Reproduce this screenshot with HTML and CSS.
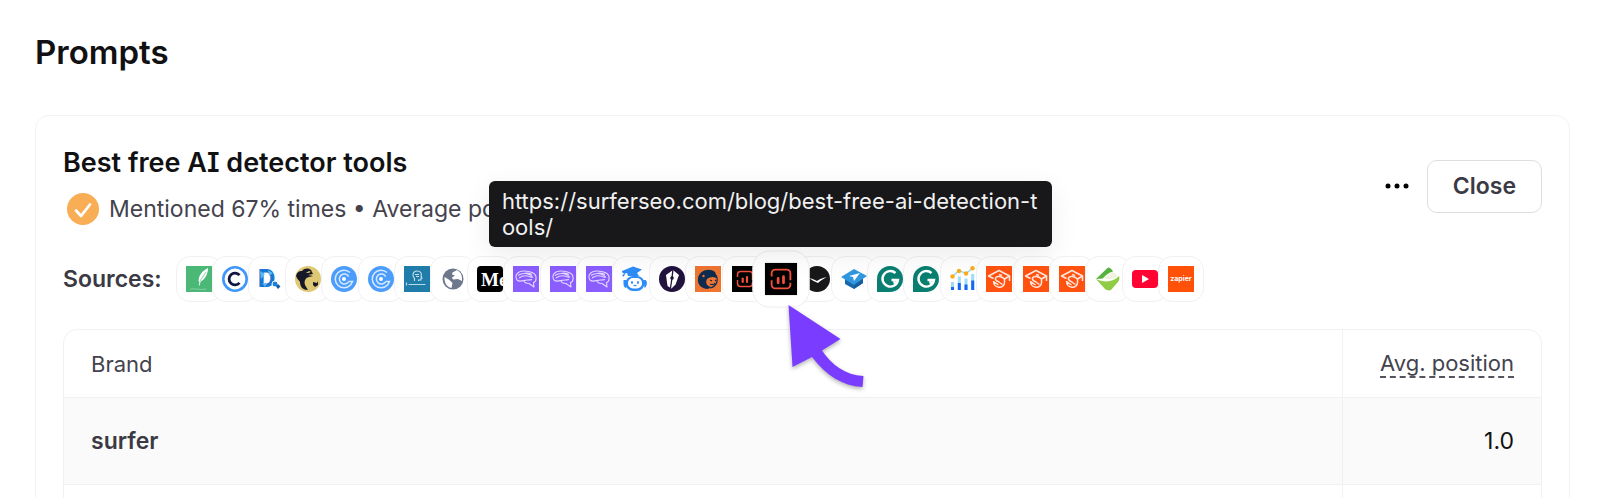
FILE: index.html
```html
<!DOCTYPE html>
<html lang="en">
<head>
<meta charset="utf-8">
<title>Prompts</title>
<link rel="stylesheet" href="styles.css">
</head>
<body>
<svg class="defs" aria-hidden="true">
  <symbol id="i-leaf" viewBox="0 0 26 26"><path fill="#4bb878" d="M0 0h26v26H0z"/><path fill="#fff" d="M22 2c-6 3-9 7-9.500 13l1 1-.7 3.500h.8l1-4C19 13.500 22 8 22 2z"/><path fill="none" stroke="#86cfa4" d="M4 23.500c4-2 8 1 16-.5"/><path stroke="#4bb878" stroke-width=".6" d="m14 15 6-9"/></symbol>
  <symbol id="i-copy" viewBox="0 0 26 26"><circle cx="13" cy="13" r="11.700" fill="#fff" stroke="#4096fb" stroke-width="2.600"/><path d="M17.500 9.200a5.900 5.900 0 1 0 0 7.600" fill="none" stroke="#131340" stroke-width="2.800"/></symbol>
  <symbol id="i-bird" viewBox="0 0 26 26"><circle cx="13" cy="13" r="13" fill="#dfc874"/><path fill="#17172a" d="M1 10c1-4 3-5 6-5 3-3 6-3 9-1l2 4-5 1 5 1-4 1c-4 1-5 4-4 8l3 5c-5 0-8-3-8-8-1-2-3-3-4-6zm17 6 4 1 1-2v4l-3 2-2-2z"/><path fill="#dfc874" d="m11 7 3-2 2 1-3 1z"/></symbol>
  <symbol id="i-swirl" viewBox="0 0 26 26"><circle cx="13" cy="13" r="13" fill="#4b9cfb"/><g fill="none" stroke="#d7e9ff" stroke-width="1.500"><path d="M19 6.500A8.800 8.800 0 1 0 19.500 19l2-3.500h-4"/><path d="M17.700 15.500a5 5 0 1 1 0-5"/></g><circle cx="13" cy="13" r="2" fill="#fff"/></symbol>
  <symbol id="i-head" viewBox="0 0 26 26"><path fill="#207ca8" d="M0 0h26v26H0z"/><path fill="none" stroke="#c8e2ee" stroke-width="1.100" d="M10.500 15v-2.500c-3-3-1.500-7.500 2.500-7.500s5 3 4 5l1 2h-1v2h-2.500V15M11 8.500h4m-3 2h3"/><path stroke="#b9dae8" stroke-width="1.200" d="M4.500 18.500h17M2.500 16.500v3"/></symbol>
  <symbol id="i-globe" viewBox="0 0 26 26"><circle cx="13" cy="13" r="10.500" fill="#6d788d"/><path fill="#fff" d="M12.500 6.500 17 4c3 1.500 5 4.500 5 8v3l-4-2-5 .5-1-2 3-2-3-1zM4.500 11l5 3 3 3-1 5C7 21 4 17 4.500 11z"/></symbol>
  <symbol id="i-brain" viewBox="0 0 26 26"><path fill="#8a5dff" d="M0 0h26v26H0z"/><g fill="none" stroke="#e3d8ff" stroke-width="1.100" stroke-linejoin="round"><path d="M4 14c-3-5 1-9 7-9s13 2 12 8c0 2-1 3-2.500 3.500L21 21l-5-3.500c-3 0-5-1-5-3 2-1 5 0 8-1"/><path d="M4 14c2 2 5 1 7 .5M5 9.500c4-3 11-3 15 2M6 12c4-3 8-3 13-.500M11 7.500c3-1 6 0 8 1"/></g></symbol>
  <symbol id="i-robot" viewBox="0 0 26 26"><path fill="#2e8cf7" d="m-1 5.500 12-5 9 3-5 3.500 2 3H6l-1-3-2 .5-1 3-2-.5 2-2.500zM1.500 14h3v8c-2 0-3-2-3-4zm20 0h2c2 1 2 6-1 8z"/><rect x="3.500" y="10" width="19" height="15" rx="7.500" fill="#2e8cf7"/><rect x="6" y="12" width="14" height="10.500" rx="5" fill="#fff"/><path stroke="#2e8cf7" stroke-width="1.800" stroke-linecap="round" d="M10 16v1m6-1v1"/><path fill="none" stroke="#2e8cf7" stroke-width="1.200" d="M11.500 19.500h3"/></symbol>
  <symbol id="i-pen" viewBox="0 0 26 26"><circle cx="13" cy="13" r="13" fill="#20113d"/><path fill="#fff" d="m14 4-7 5 1.500 11 4 2.500 4-4L20 9z"/><path stroke="#20113d" stroke-width="1.300" d="m14 3-1 9-1.500 10"/><circle cx="13" cy="12" r="1.800" fill="#20113d"/></symbol>
  <symbol id="i-sloth" viewBox="0 0 26 26"><path fill="#ee7532" d="M0 0h26v26H0z"/><path fill="#0e2b50" d="M20 6C14 1 4 5 3 12s4 11 10 11l3-2c-4-1-6-4-4-8 3-2 6-3 9-1 1-1 0-4-1-6z"/><path fill="none" stroke="#0e2b50" stroke-width="1.200" d="M21 9c3 6 0 12-6 13M15 14l2 1m3-1 1 1m-6 3c2 1 4 1 5-1"/><circle cx="8.500" cy="10" r="1.200" fill="#ee7532"/></symbol>
  <symbol id="i-bars" viewBox="0 0 26 26"><path d="M0 0h26v26H0z"/><g fill="none" stroke="#f0503c"><path stroke-width="1.500" d="M5.500 11V8.500a3 3 0 0 1 3-3h9a3 3 0 0 1 3 3V14m0 2v1.500a3 3 0 0 1-3 3h-9a3 3 0 0 1-3-3V14"/><path stroke-width="2.200" stroke-linecap="round" d="M10.700 12.500v3.500m4.300-5v5"/></g></symbol>
  <symbol id="i-wave" viewBox="0 0 26 26"><circle cx="13" cy="13" r="13" fill="#18181a"/><path fill="#fff" d="M5 12c4 1 6 2 8 3 3-2 5-3 10-4-4 2-7 4-9 6-3-1-6-3-9-5z"/></symbol>
  <symbol id="i-cap" viewBox="0 0 26 26"><path fill="#1768ac" d="M4 11v7l9 5 9-6v-7z"/><path fill="#2f96df" d="M0 11 13 3l13 7-13 9z"/><path fill="#155f9f" d="m13 19 9-6v4l-9 6z"/><path fill="#fff" d="m19 7-11 3 4 1 1 4z"/></symbol>
  <symbol id="i-g" viewBox="0 0 26 26"><path fill="#087f70" d="M0 26V13a13 13 0 1 1 13 13z"/><path fill="none" stroke="#fff" stroke-width="2.400" d="M18.500 7A7.800 7.800 0 1 0 21 14h-6.500m3 3.500V14"/></symbol>
  <symbol id="i-chart" viewBox="0 0 26 26"><path stroke="#9fdcf8" stroke-width="3" d="M2.500 16v8M9.300 10.500V24M16 12.500V24m6.700-16v16"/><path stroke="#1467f5" stroke-width="3" d="M2.500 21v3m6.800-7v7M16 18.500V24m6.700-9.500V24"/><path fill="none" stroke="#8bd6f7" stroke-width="1.200" d="m2.500 10.500 6.500-6 7 3 7-5.500"/><g fill="#fbad18"><circle cx="2.500" cy="10.500" r="2.200"/><circle cx="9" cy="5" r="2.200"/><circle cx="16" cy="7.500" r="2.200"/><circle cx="22.500" cy="2.200" r="2.200"/></g></symbol>
  <symbol id="i-grad" viewBox="0 0 26 26"><path fill="#ff5210" d="M0 0h26v26H0z"/><g fill="none" stroke="#ffe8de" stroke-width="1.500" stroke-linejoin="round"><path d="M7.500 12.500 2.500 10 13 4.500 23.500 10l-5 3c-3-3-8-3.500-9-1s2 3 4 4.500l3 2"/><path d="M23.500 10v5M7.500 15c0 8 11 8 11 1.500V13m-11 2.500 5 3.500"/><path d="m13 8.500 3 1"/></g></symbol>
  <symbol id="i-green" viewBox="0 0 26 26"><path fill="#54b33f" d="M1 13 13 1.500c2 0 4 2 5 4-4 1-8 4-10 7z"/><path fill="#f0f3dd" d="m18 6 5 4c-5 4-10 4-15 2z"/><path fill="#91cc46" d="M1 13c8 4 18 3 23-3 1 2 0 5-1 6l-7 8c-2 1-5 0-6-1z"/></symbol>
  <symbol id="i-yt" viewBox="0 0 26 26"><rect y="4" width="26" height="18" rx="4" fill="#ff0333"/><path fill="#fff" d="m10 9 7 4-7 4z"/></symbol>
</svg>

<main class="page">
  <h1 class="page-title">Prompts</h1>
  <section class="card">
    <header class="card-header">
      <div class="summary">
        <h2 class="prompt-title">Best free AI detector tools</h2>
        <p class="prompt-meta">
          <svg class="check" viewBox="0 0 32 32" aria-hidden="true"><circle cx="16" cy="16" r="16" fill="#f9ad54"/><path fill="none" stroke="#fff" stroke-width="2.800" stroke-linecap="round" stroke-linejoin="round" d="m9 17.500 5 5.500 9-11.500"/></svg>
          <span>Mentioned 67% times • Average position 1.0</span>
        </p>
      </div>
      <div class="actions">
        <button class="more" type="button" aria-label="More options"><svg viewBox="0 0 24 6"><circle cx="3" cy="3" r="2.500"/><circle cx="12" cy="3" r="2.500"/><circle cx="21" cy="3" r="2.500"/></svg></button>
        <button class="close" type="button">Close</button>
      </div>
    </header>

    <div class="sources">
      <h3 class="sources-label">Sources:</h3>
      <ul class="source-list">
        <li><a class="chip" href="#" aria-label="Source 1"><svg><use href="#i-leaf"/></svg></a></li>
        <li><a class="chip" href="#" aria-label="Source 2"><svg><use href="#i-copy"/></svg></a></li>
        <li><a class="chip" href="#" aria-label="Source 3"><svg viewBox="0 0 26 26"><text class="logo-d" x="0" y="21">D</text><path fill="#6cc7f7" opacity=".8" d="m2 5 5 3-4 5zm8-1 5 3-4 3zm-6 13 5 1-2 3z"/><circle cx="17" cy="18" r="3" fill="#1b82dc" stroke="#fff"/><path fill="#1a5ba8" d="m20 18 2.500 2.500L20 23l-2-2.500z"/></svg></a></li>
        <li><a class="chip" href="#" aria-label="Source 4"><svg><use href="#i-bird"/></svg></a></li>
        <li><a class="chip" href="#" aria-label="Source 5"><svg><use href="#i-swirl"/></svg></a></li>
        <li><a class="chip" href="#" aria-label="Source 6"><svg><use href="#i-swirl"/></svg></a></li>
        <li><a class="chip" href="#" aria-label="Source 7"><svg><use href="#i-head"/></svg></a></li>
        <li><a class="chip" href="#" aria-label="Source 8"><svg><use href="#i-globe"/></svg></a></li>
        <li><a class="chip" href="#" aria-label="Medium"><svg viewBox="0 0 26 26"><rect width="26" height="26" rx="4"/><text class="logo-medium" x="4" y="20">Me</text></svg></a></li>
        <li><a class="chip" href="#" aria-label="Source 10"><svg><use href="#i-brain"/></svg></a></li>
        <li><a class="chip" href="#" aria-label="Source 11"><svg><use href="#i-brain"/></svg></a></li>
        <li><a class="chip" href="#" aria-label="Source 12"><svg><use href="#i-brain"/></svg></a></li>
        <li><a class="chip" href="#" aria-label="Source 13"><svg><use href="#i-robot"/></svg></a></li>
        <li><a class="chip" href="#" aria-label="Source 14"><svg><use href="#i-pen"/></svg></a></li>
        <li><a class="chip" href="#" aria-label="Source 15"><svg><use href="#i-sloth"/></svg></a></li>
        <li><a class="chip" href="#" aria-label="Surfer"><svg><use href="#i-bars"/></svg></a></li>
        <li class="active">
          <a class="chip" href="#" aria-label="Surfer blog" aria-describedby="source-tip"><svg><use href="#i-bars"/></svg></a>
          <span class="tooltip" id="source-tip" role="tooltip">https://surferseo.com/blog/best-free-ai-detection-tools/</span>
          <svg class="pointer" viewBox="0 0 100 100" aria-hidden="true"><path fill="#7a3dff" d="M12.500 10 64.500 44 46 55.500C56 70 69 80 87.500 81L86.500 92C66 91 50 80 36 62L16.500 72z"/></svg>
        </li>
        <li><a class="chip" href="#" aria-label="Source 18"><svg><use href="#i-wave"/></svg></a></li>
        <li><a class="chip" href="#" aria-label="Source 19"><svg><use href="#i-cap"/></svg></a></li>
        <li><a class="chip" href="#" aria-label="Grammarly"><svg><use href="#i-g"/></svg></a></li>
        <li><a class="chip" href="#" aria-label="Grammarly"><svg><use href="#i-g"/></svg></a></li>
        <li><a class="chip" href="#" aria-label="Source 22"><svg><use href="#i-chart"/></svg></a></li>
        <li><a class="chip" href="#" aria-label="Source 23"><svg><use href="#i-grad"/></svg></a></li>
        <li><a class="chip" href="#" aria-label="Source 24"><svg><use href="#i-grad"/></svg></a></li>
        <li><a class="chip" href="#" aria-label="Source 25"><svg><use href="#i-grad"/></svg></a></li>
        <li><a class="chip" href="#" aria-label="Source 26"><svg><use href="#i-green"/></svg></a></li>
        <li><a class="chip" href="#" aria-label="YouTube"><svg><use href="#i-yt"/></svg></a></li>
        <li><a class="chip" href="#" aria-label="Zapier"><svg viewBox="0 0 26 26"><path fill="#ff5107" d="M0 0h26v26H0z"/><text class="logo-zapier" x="13" y="15">zapier</text></svg></a></li>
      </ul>
    </div>

    <table class="brands">
      <thead>
        <tr><th scope="col">Brand</th><th class="position" scope="col"><span class="hint">Avg. position</span></th></tr>
      </thead>
      <tbody>
        <tr class="shaded"><th scope="row">surfer</th><td class="position">1.0</td></tr>
        <tr><td></td><td class="position"></td></tr>
      </tbody>
    </table>
  </section>
</main>
</body>
</html>
```
FILE: styles.css
```css
* { box-sizing: border-box; }

body {
  margin: 0;
  height: 100vh;
  overflow: hidden;
  background: #fff;
  color: #111113;
  font-family: Inter, "Liberation Sans", sans-serif;
  font-size: 23px;
  font-feature-settings: "cv08";
}

h1, h2, h3, p, ul { margin: 0; padding: 0; }

.defs { position: absolute; width: 0; height: 0; }

.page { padding: 32px 30px 0 35px; }

.page-title {
  margin-bottom: 43px;
  font-size: 33px;
  line-height: 40px;
  font-weight: 600;
}

.card {
  padding: 31px 27px;
  border: 1px solid #f3f3f4;
  border-radius: 14px;
}

.card-header {
  display: flex;
  align-items: center;
  justify-content: space-between;
}

.prompt-title {
  margin-bottom: 14px;
  font-size: 27px;
  line-height: 32px;
  font-weight: 600;
}

.prompt-meta {
  display: flex;
  align-items: center;
  gap: 10px;
  padding-left: 4px;
  color: #44434d;
  line-height: 32px;
}

.check { width: 32px; height: 32px; }

.actions { display: flex; align-items: center; gap: 12px; }

.more {
  display: flex;
  padding: 12px 6px;
  border: 0;
  background: none;
}

.more svg { width: 24px; height: 6px; }

.close {
  padding: 11px 25px;
  border: 1px solid #dedee1;
  border-radius: 10px;
  background: #fff;
  color: #3b3a44;
  font: inherit;
  font-weight: 600;
  line-height: 29px;
}

.sources {
  display: flex;
  align-items: center;
  gap: 14px;
  margin: 31px 0 27px;
}

.sources-label {
  color: #3b3a44;
  font-size: 23px;
  line-height: 28px;
  font-weight: 600;
}

.source-list {
  display: grid;
  grid-template-columns: repeat(28, minmax(0, 1fr));
  flex: 0 1 1028px;
  padding-right: 9px;
  list-style: none;
}

.source-list li { position: relative; }

.chip {
  display: flex;
  width: 46px;
  height: 46px;
  align-items: center;
  justify-content: center;
  border: 1px solid #f1f1f2;
  border-radius: 14px;
  background: #fff;
}

.chip svg { width: 26px; height: 26px; }

.logo-d { fill: #1976d2; font-size: 24px; font-weight: 800; }

.logo-medium {
  fill: #fff;
  font-family: "Liberation Serif", serif;
  font-size: 19px;
  font-weight: 700;
}

.logo-zapier {
  fill: #fff;
  font-size: 7px;
  font-weight: 700;
  text-anchor: middle;
}

.source-list .active { z-index: 2; }

.active .chip { transform: scale(1.25); }

.tooltip {
  position: absolute;
  bottom: calc(100% + 9px);
  left: -269px;
  width: 563px;
  padding: 7px 13px;
  border-radius: 6px;
  background: #18181b;
  box-shadow: 0 8px 28px rgba(0, 0, 0, 0.08);
  color: #f1f1f1;
  font-size: 22px;
  line-height: 26px;
  word-break: break-all;
}

.pointer {
  position: absolute;
  top: 39px;
  left: 18px;
  width: 100px;
  height: 100px;
  filter: drop-shadow(0 2px 2px rgba(0, 0, 0, 0.3));
}

.brands {
  width: 100%;
  border: 1px solid #f1f1f2;
  border-radius: 14px;
  border-spacing: 0;
  overflow: hidden;
}

.brands th, .brands td {
  padding: 0 27px;
  border-bottom: 1px solid #f1f1f2;
  text-align: left;
}

.brands thead th {
  height: 68px;
  color: #44434d;
  font-size: 22px;
  font-weight: 400;
}

.brands tbody th, .brands tbody td { height: 87px; }

.brands tbody th { color: #3b3a44; font-weight: 600; }

.brands .position {
  width: 199px;
  border-left: 1px solid #f1f1f2;
  text-align: right;
}

.shaded { background: #fafafa; }

.hint {
  display: inline-block;
  border-bottom: 2px dashed #55535e;
  line-height: 26px;
  white-space: nowrap;
}
```
